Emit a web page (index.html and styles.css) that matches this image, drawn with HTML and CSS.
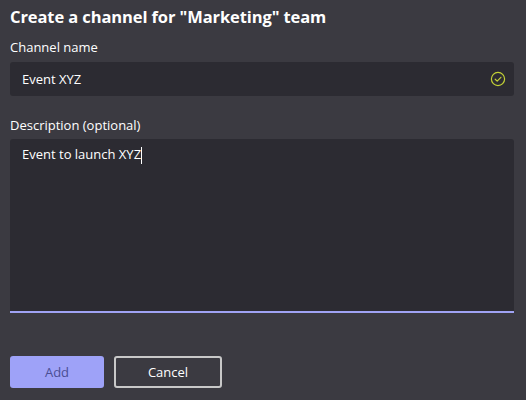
FILE: index.html
```html
<!DOCTYPE html>
<html>
<head>
<meta charset="utf-8">
<link rel="stylesheet" href="styles.css">
</head>
<body>
<div class="dialog">
  <h1 class="title">Create a channel for "Marketing" team</h1>
  <label class="label">Channel name</label>
  <div class="input">
    <span class="input-text">Event XYZ</span>
    <svg class="check" width="16" height="16" viewBox="0 0 16 16">
      <circle cx="8" cy="8" r="6.6" fill="none" stroke="#c3d136" stroke-width="1.2"/>
      <path d="M5.2 8.2 L7.2 10.1 L10.9 6.3" fill="none" stroke="#c3d136" stroke-width="1.2" stroke-linecap="round" stroke-linejoin="round"/>
    </svg>
  </div>
  <label class="label label-desc">Description (optional)</label>
  <div class="textarea"><span class="ta-text">Event to launch XYZ</span><span class="caret"></span></div>
  <div class="actions">
    <button class="btn btn-primary">Add</button>
    <button class="btn btn-secondary">Cancel</button>
  </div>
</div>
</body>
</html>
```
FILE: styles.css
```css
html, body {
  margin: 0;
  padding: 0;
  background: #3b3a41;
  height: 100%;
}
body {
  font-family: "Open Sans", "Noto Sans", sans-serif;
  color: #ffffff;
}
.dialog {
  padding: 5px 12px 0 10px;
  display: flex;
  flex-direction: column;
}
.title {
  margin: 0;
  font-size: 16.5px;
  font-weight: 700;
  line-height: 24px;
  color: #ffffff;
  letter-spacing: -0.1px;
}
.label {
  display: block;
  margin-top: 9px;
  font-size: 13px;
  line-height: 18px;
  color: #ffffff;
}
.label-desc {
  margin-top: 20px;
}
.input {
  margin-top: 6px;
  height: 34px;
  background: #2c2b32;
  border-radius: 3px;
  display: flex;
  align-items: center;
  justify-content: space-between;
  padding: 0 8px 0 12px;
}
.input-text, .ta-text {
  font-size: 13px;
  color: #ffffff;
}
.check {
  display: block;
}
.textarea {
  box-sizing: border-box;
  margin-top: 5px;
  height: 174px;
  background: #2c2b32;
  border-radius: 3px 3px 0 0;
  border-bottom: 2px solid #a0a3f4;
  padding: 6px 12px;
  display: flex;
  align-items: flex-start;
  line-height: 19px;
}
.caret {
  display: inline-block;
  width: 1px;
  height: 17px;
  margin-top: 2px;
  background: #ffffff;
}
.actions {
  margin-top: 43px;
  display: flex;
  gap: 10px;
}
.btn {
  font-family: "Open Sans", "Noto Sans", sans-serif;
  font-size: 13px;
  height: 32px;
  border-radius: 3px;
  cursor: pointer;
}
.btn-primary {
  width: 94px;
  background: #9ea2f8;
  border: none;
  color: #4a4e93;
}
.btn-secondary {
  width: 108px;
  background: transparent;
  border: 2px solid #c8c8c8;
  color: #ffffff;
}
```
